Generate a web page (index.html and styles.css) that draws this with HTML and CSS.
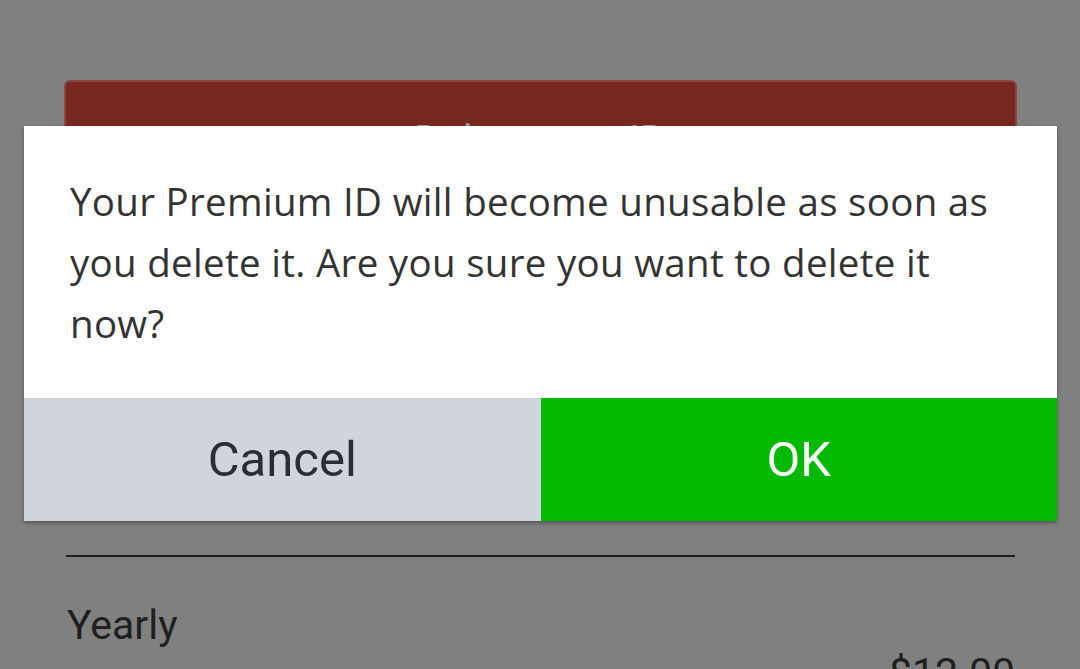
FILE: index.html
```html
<!DOCTYPE html>
<html lang="en">
<head>
    <meta charset="UTF-8">
    <meta name="viewport" content="width=device-width, initial-scale=1.0">
    <title>Premium ID</title>
    <link rel="stylesheet" href="styles.css">
</head>
<body>
    <div class="page">
        <div class="delete-btn">Delete your ID</div>
        <div class="spacer"></div>
        <hr class="divider">
        <div class="plan-row">
            <span class="plan-name">Yearly</span>
        </div>
        <div class="plan-price">$12.00</div>
    </div>

    <div class="dialog">
        <p class="dialog-message">Your Premium ID will become unusable as soon as you delete it. Are you sure you want to delete it now?</p>
        <div class="dialog-actions">
            <button class="dialog-btn cancel">Cancel</button>
            <button class="dialog-btn ok">OK</button>
        </div>
    </div>
</body>
</html>
```

FILE: styles.css
```css
body {
    margin: 0;
    background-color: #808080;
    font-family: "Roboto", "Liberation Sans", sans-serif;
    overflow: hidden;
    height: 669px;
}
.page {
    padding: 80px 63px 0 64px;
}
.delete-btn {
    height: 100px;
    box-sizing: border-box;
    background-color: #782720;
    border: 2px solid #8a4640;
    border-radius: 6px;
    color: #a3a3a3;
    font-size: 41px;
    line-height: 48px;
    text-align: center;
    padding-top: 34px;
}
.spacer {
    height: 375px;
}
.divider {
    margin: 0 2px 0 2px;
    border: none;
    border-top: 2px solid #1e1e1e;
}
.plan-row {
    padding-top: 44px;
    font-size: 41px;
    color: #1f1f1f;
    line-height: 48px;
    padding-left: 3px;
}
.plan-price {
    text-align: right;
    font-size: 41px;
    line-height: 48px;
    color: #1f1f1f;
    padding-right: 2px;
    margin-top: 0;
}
.dialog {
    position: absolute;
    left: 24px;
    top: 126px;
    width: 1033px;
    background-color: #fff;
    box-shadow: 0 2px 4px rgba(0, 0, 0, 0.35);
}
.dialog-message {
    margin: 0;
    padding: 45px 46px 44px 46px;
    font-family: "Open Sans", sans-serif;
    font-size: 38.5px;
    letter-spacing: 0.3px;
    line-height: 61px;
    color: #333;
}
.dialog-actions {
    display: flex;
}
.dialog-btn {
    flex: 1;
    height: 123px;
    border: none;
    font-family: "Roboto", sans-serif;
    font-size: 49px;
    padding: 0;
}
.cancel {
    background-color: #d0d5dc;
    color: #2a2d33;
}
.ok {
    background-color: #00b900;
    color: #fff;
}
```
